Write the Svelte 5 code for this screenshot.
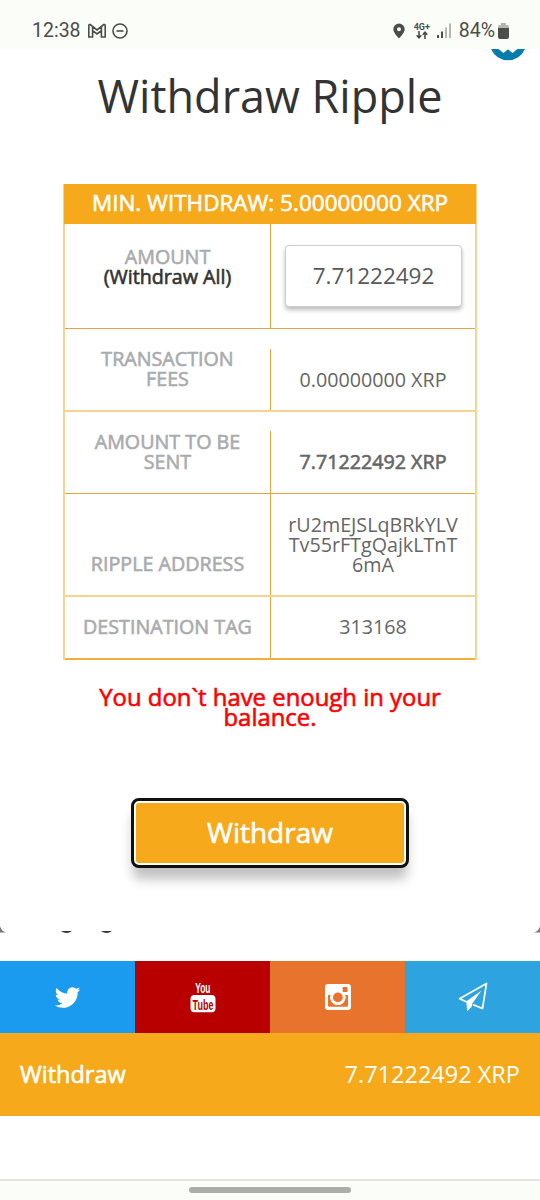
<script>
	let amount = '7.71222492';

	const rows = [
		{ kind: 'fees', label: 'TRANSACTION FEES', value: '0.00000000 XRP' },
		{ kind: 'sent', label: 'AMOUNT TO BE SENT', value: '7.71222492 XRP' },
		{ kind: 'address', label: 'RIPPLE ADDRESS', value: 'rU2mEJSLqBRkYLVTv55rFTgQajkLTnT6mA' },
		{ kind: 'tag', label: 'DESTINATION TAG', value: '313168' }
	];
</script>

<div class="screen">
	<header class="status">
		<span class="time">12:38</span>
		<svg class="gmail" width="20" height="16" viewBox="0 0 20 16">
			<path d="M1.8 14V2.8Q1.8 1.2 3.2 1.6L10 7 16.8 1.6Q18.2 1.2 18.2 2.8V14H14.4V7.6L10 11 5.6 7.6V14ZM5.6 7.6V4M14.4 7.6V4" />
		</svg>
		<svg class="dnd" width="16" height="16" viewBox="0 0 16 16">
			<circle cx="8" cy="8" r="7" />
			<path d="M4.5 8H11.5" />
		</svg>
		<div class="spacer"></div>
		<svg class="pin" width="12" height="16" viewBox="0 0 12 16">
			<path fill-rule="evenodd" d="M6 .5A5.7 5.7 0 0 0 .3 6.2C.3 9.7 6 15.5 6 15.5S11.7 9.7 11.7 6.2A5.7 5.7 0 0 0 6 .5ZM6 4.2A2 2 0 1 1 6 8.2 2 2 0 0 1 6 4.2Z" />
		</svg>
		<div class="network">
			<span>4G+</span>
			<svg width="12" height="8" viewBox="0 0 12 8">
				<path d="M3 0V6.5M.7 4.2L3 6.7 5.3 4.2M9 8V1.3M6.7 3.7L9 1.2 11.3 3.7" />
			</svg>
		</div>
		<svg class="signal" width="14" height="15" viewBox="0 0 14 15">
			<path fill="#4b4d49" d="M0 12H2V15H0ZM4 8.5H6V15H4Z" />
			<path fill="#b5b7b2" d="M8 4.5H10V15H8ZM12 .5H14V15H12Z" />
		</svg>
		<span class="percent">84%</span>
		<svg class="battery" width="11" height="16" viewBox="0 0 11 16">
			<path fill="#b5b7b2" d="M3 0H8V2H9.5Q11 2 11 3.5V6H0V3.5Q0 2 1.5 2H3Z" />
			<path fill="#4b4d49" d="M0 5H11V14Q11 16 9 16H2Q0 16 0 14Z" />
		</svg>
	</header>

	<main>
		<svg class="bubble" width="34" height="13" viewBox="0 0 34 13">
			<path d="M0 0H7.5L12.5 4 17 .3 21.5 4 26.5 0H34A18.5 18.5 0 0 1 0 0Z" />
		</svg>
		<h1>Withdraw Ripple</h1>

		<section class="table">
			<div class="heading strong">MIN. WITHDRAW: 5.00000000 XRP</div>
			<div class="row amount">
				<div class="label strong">AMOUNT<b>(Withdraw All)</b></div>
				<div class="value"><input bind:value={amount} aria-label="Amount" /></div>
			</div>
			{#each rows as row}
				<div class="row {row.kind}">
					<div class="label strong">{row.label}</div>
					<div class="value">{row.value}</div>
				</div>
			{/each}
		</section>

		<p class="error strong">You don`t have enough in your balance.</p>
		<button class="strong">Withdraw</button>
	</main>

	<div class="behind">
		<svg class="corner" width="6" height="7" viewBox="0 0 6 7"><path d="M0 0Q1 5 6 6.5H0Z" /></svg>
		<svg class="descenders" width="54" height="4" viewBox="0 0 54 4">
			<path d="M1 0H12Q6.5 4 1 0ZM41 0H52Q46.5 4 41 0Z" />
		</svg>
		<svg class="corner" width="6" height="7" viewBox="0 0 6 7"><path d="M6 0Q5 5 0 6.5H6Z" /></svg>
	</div>

	<nav>
		<div class="twitter">
			<svg width="29" height="29" viewBox="0 0 1792 1792">
				<path fill="#fff" d="M1684 408q-67 98-162 167 1 14 1 42 0 130-38 259.5t-115.5 248.5-184.5 210.5-258 146-323 54.5q-271 0-496-145 35 4 78 4 225 0 401-138-105-2-188-64.5t-114-159.5q33 5 61 5 43 0 85-11-112-23-185.5-111.5t-73.5-205.5v-4q68 38 146 41-66-44-105-115t-39-154q0-88 44-163 121 149 294.5 238.5t371.5 99.5q-8-38-8-74 0-134 94.5-228.5t228.5-94.5q140 0 236 102 109-21 205-78-37 115-142 178 93-10 186-50z" />
			</svg>
		</div>
		<div class="youtube">
			<svg width="26" height="32" viewBox="0 0 26 32">
				<rect x=".5" y="14" width="25" height="17.2" rx="4" fill="#fff" />
				<text transform="translate(12.8 12.3) scale(.56 1)" fill="#fff">You</text>
				<text transform="translate(13 28.5) scale(.6 1)" fill="#b90000">Tube</text>
			</svg>
		</div>
		<div class="instagram">
			<svg width="26" height="26" viewBox="0 0 26 26">
				<rect width="26" height="26" rx="3.2" fill="#fff" />
				<path fill="#e8732c" d="M3 11H5.7A7.6 7.6 0 1 0 20.1 11H23V21.4Q23 22.8 21.6 22.8H4.4Q3 22.8 3 21.4Z" />
				<circle cx="12.9" cy="13.4" r="7.6" fill="#fff" />
				<circle cx="12.9" cy="13.4" r="4.9" fill="#e8732c" />
				<rect x="17.6" y="3.1" width="5" height="5" rx=".8" fill="#e8732c" />
			</svg>
		</div>
		<div class="telegram">
			<svg width="30" height="30" viewBox="0 0 30 30">
				<path fill="none" stroke="#fff" stroke-width="1.7" stroke-linejoin="round" d="M8.5 19.8L1.5 16.7 28.5 1.5 24.5 26.5 15 22.6" />
				<path fill="#fff" d="M23.5 8.5L8.2 19.5 9.3 29.3 13.8 24.5 14.2 21.8Z" />
			</svg>
		</div>
	</nav>

	<div class="summary">
		<span class="strong">Withdraw</span>
		<span>{amount} XRP</span>
	</div>

	<footer><i></i></footer>
</div>

<style>
	:global(body) {
		background: #fff;
	}
	.screen {
		display: flex;
		flex-direction: column;
		width: 540px;
		height: 1200px;
		overflow: hidden;
		font-family: 'Open Sans', sans-serif;
		color: #666;
	}
	/* thickened regular weight, keeps the regular widths */
	.strong {
		font-weight: 400;
		-webkit-text-stroke: 0.6px currentColor;
	}
	.status {
		display: flex;
		align-items: center;
		box-sizing: border-box;
		height: 49px;
		padding: 12px 31px 0 32px;
		background: #fbfdf8;
		color: #4b4d49;
		font: 19.5px Roboto, sans-serif;
	}
	.gmail {
		margin-left: 6px;
	}
	.dnd {
		margin-left: 5px;
	}
	.gmail path,
	.dnd,
	.network svg {
		fill: none;
		stroke: #4b4d49;
		stroke-width: 1.6;
	}
	.spacer {
		flex: 1;
	}
	.pin {
		fill: #4b4d49;
	}
	.network {
		display: flex;
		flex-direction: column;
		align-items: center;
		width: 18px;
		margin-left: 8px;
		font: bold 9px/8px Roboto, sans-serif;
	}
	.signal {
		margin: 0 8px 0 6px;
	}
	.battery {
		margin-left: 3px;
	}
	main {
		position: relative;
		display: flex;
		flex-direction: column;
		align-items: center;
		height: 877px;
	}
	.bubble {
		position: absolute;
		top: 0;
		right: 15px;
		fill: #087cad;
	}
	h1 {
		margin: 16px 0 0;
		height: 62px;
		font-size: 45px;
		font-weight: 400;
		line-height: 62px;
		color: #333;
	}
	.table {
		box-sizing: border-box;
		width: 414px;
		margin-top: 57px;
		border: solid #f6d38f;
		border-width: 0 2px;
		font-size: 19.7px;
		line-height: 20px;
		text-align: center;
	}
	.heading {
		height: 40px;
		margin: 0 -1px;
		background: #f6a91a;
		color: #fff;
		font-size: 22.5px;
		line-height: 38px;
	}
	.row {
		display: grid;
		grid-template-columns: 206px 204px;
		box-sizing: border-box;
		border-bottom: 1px solid #e3a63f;
	}
	.label {
		box-sizing: border-box;
		border-right: 1px solid #e3a63f;
		color: #a9abae;
	}
	.label b {
		display: block;
		font-weight: 400;
		color: #333;
	}
	.value {
		overflow-wrap: anywhere;
	}
	.amount {
		height: 105px;
	}
	.amount .label {
		padding-top: 23px;
	}
	.amount .value {
		padding: 21px 14px 0;
	}
	input {
		box-sizing: border-box;
		width: 177px;
		height: 62px;
		border: 1px solid #ccc;
		border-radius: 4px;
		padding: 0 0 1px;
		box-shadow: 0 3px 4px rgba(0, 0, 0, 0.25);
		color: #55595c;
		font: 22.5px 'Open Sans', sans-serif;
		text-align: center;
	}
	.fees {
		height: 83px;
		padding-top: 20px;
		border-bottom: 2px solid #f6d38f;
	}
	.sent {
		height: 82px;
		padding-top: 19px;
	}
	.fees .label {
		padding: 0 24px;
	}
	.sent .label {
		padding: 1px 24px 0;
	}
	.fees .value,
	.sent .value {
		padding-top: 21px;
	}
	.sent .value {
		-webkit-text-stroke: 0.6px currentColor;
	}
	.address {
		height: 103px;
		border-bottom: 2px solid #f6d38f;
	}
	.address .label {
		padding-top: 60px;
	}
	.address .value {
		padding: 21px 14px 0;
	}
	.tag {
		height: 63px;
		border-bottom: 2px solid #f2b03a;
	}
	.tag .label,
	.tag .value {
		padding-top: 20px;
	}
	.error {
		width: 370px;
		margin: 27px 0 0;
		color: #f00;
		font-size: 23.9px;
		line-height: 20px;
		text-align: center;
	}
	button {
		width: 268px;
		height: 60px;
		margin-top: 76px;
		padding: 0 0 2px;
		border: 0;
		border-radius: 3px;
		outline: 3px solid #101010;
		outline-offset: 2px;
		background: #f6a91a;
		box-shadow: 0 0 0 3px #fff, 0 13px 12px 3px rgba(0, 0, 0, 0.25);
		color: #fff;
		font: 28px 'Open Sans', sans-serif;
	}
	.behind {
		display: flex;
		align-items: flex-start;
		height: 35px;
	}
	.corner {
		fill: #777;
	}
	.descenders {
		margin: 5px auto 0 54px;
		fill: #333;
	}
	nav {
		display: grid;
		grid-template-columns: repeat(4, 1fr);
		height: 72px;
	}
	nav div {
		display: grid;
		place-items: center;
	}
	.twitter {
		background: #1b9bf0;
	}
	.youtube {
		background: #b90000;
	}
	.youtube text {
		font-family: 'Liberation Sans', sans-serif;
		font-size: 15px;
		font-weight: 700;
		text-anchor: middle;
	}
	.youtube svg {
		overflow: visible;
	}
	.instagram {
		background: #e8732c;
	}
	.telegram {
		background: #2da4e0;
	}
	.summary {
		display: flex;
		align-items: center;
		justify-content: space-between;
		box-sizing: border-box;
		height: 83px;
		padding: 0 20px 1px;
		background: #f6a91a;
		color: #fff;
		font-size: 23.5px;
	}
	footer {
		display: flex;
		justify-content: center;
		box-sizing: border-box;
		height: 21px;
		margin-top: auto;
		border-top: 2px solid #e3e4e2;
		background: #fbfdf8;
	}
	footer i {
		width: 162px;
		height: 6px;
		margin-top: 6px;
		border-radius: 3px;
		background: #acaea9;
	}
</style>
